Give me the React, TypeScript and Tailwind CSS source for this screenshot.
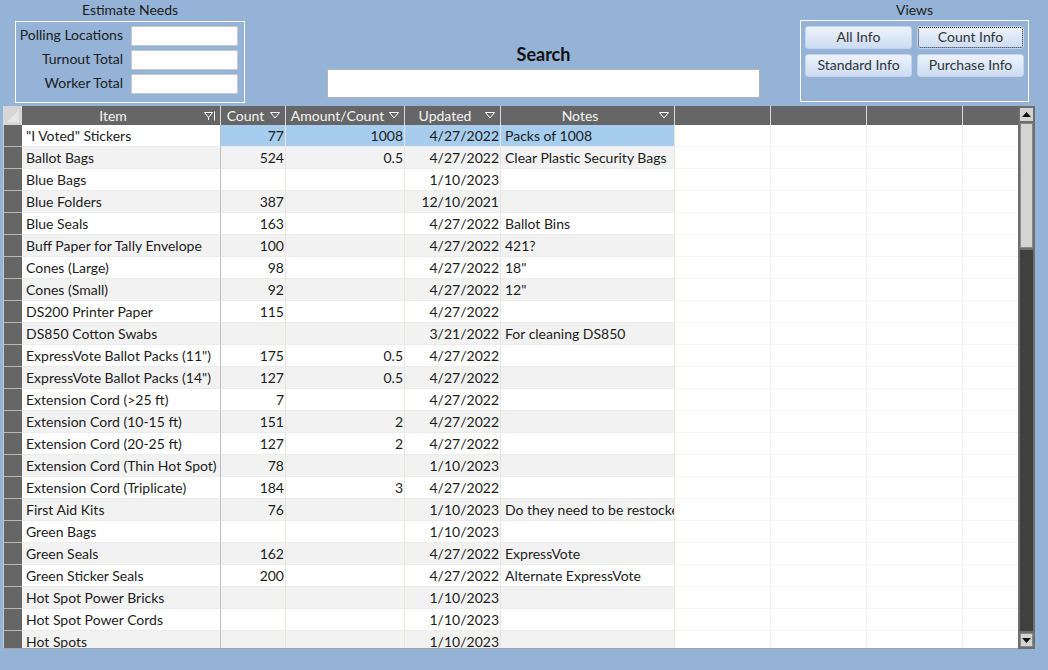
import React from "react";

type Row = [string, string, string, string, string];

const rows: Row[] = [
  ['"I Voted" Stickers', "77", "1008", "4/27/2022", "Packs of 1008"],
  ["Ballot Bags", "524", "0.5", "4/27/2022", "Clear Plastic Security Bags"],
  ["Blue Bags", "", "", "1/10/2023", ""],
  ["Blue Folders", "387", "", "12/10/2021", ""],
  ["Blue Seals", "163", "", "4/27/2022", "Ballot Bins"],
  ["Buff Paper for Tally Envelope", "100", "", "4/27/2022", "421?"],
  ["Cones (Large)", "98", "", "4/27/2022", '18"'],
  ["Cones (Small)", "92", "", "4/27/2022", '12"'],
  ["DS200 Printer Paper", "115", "", "4/27/2022", ""],
  ["DS850 Cotton Swabs", "", "", "3/21/2022", "For cleaning DS850"],
  ['ExpressVote Ballot Packs (11")', "175", "0.5", "4/27/2022", ""],
  ['ExpressVote Ballot Packs (14")', "127", "0.5", "4/27/2022", ""],
  ["Extension Cord (>25 ft)", "7", "", "4/27/2022", ""],
  ["Extension Cord (10-15 ft)", "151", "2", "4/27/2022", ""],
  ["Extension Cord (20-25 ft)", "127", "2", "4/27/2022", ""],
  ["Extension Cord (Thin Hot Spot)", "78", "", "1/10/2023", ""],
  ["Extension Cord (Triplicate)", "184", "3", "4/27/2022", ""],
  ["First Aid Kits", "76", "", "1/10/2023", "Do they need to be restocked?"],
  ["Green Bags", "", "", "1/10/2023", ""],
  ["Green Seals", "162", "", "4/27/2022", "ExpressVote"],
  ["Green Sticker Seals", "200", "", "4/27/2022", "Alternate ExpressVote"],
  ["Hot Spot Power Bricks", "", "", "1/10/2023", ""],
  ["Hot Spot Power Cords", "", "", "1/10/2023", ""],
  ["Hot Spots", "", "", "1/10/2023", ""],
];

function Arrow() {
  return (
    <svg width="10" height="7" viewBox="0 0 10 7" className="shrink-0">
      <path d="M0.5 0.5 H9.5 L5 6 Z" fill="none" stroke="#ffffff" strokeWidth="1" />
    </svg>
  );
}

function FilterArrow() {
  return (
    <svg width="12" height="10" viewBox="0 0 12 10" className="shrink-0">
      <path d="M10.5 0.5 V9.5" stroke="#ffffff" strokeWidth="1" />
      <path d="M0.5 1.5 H8.5 L4.5 6.5 Z" fill="none" stroke="#ffffff" strokeWidth="1" />
      <path d="M4.5 6.5 V9" stroke="#ffffff" strokeWidth="1" />
    </svg>
  );
}

function HeaderCell({
  w,
  label,
  icon,
}: {
  w: string;
  label?: string;
  icon?: "arrow" | "filter";
}) {
  return (
    <div className={`${w} h-full shrink-0 border-r border-[#d9d9d9] flex items-center`}>
      <div className="flex-1 text-center leading-[17px] pb-[1px] truncate">{label}</div>
      {icon === "arrow" && (
        <div className="pr-[5px] flex items-center">
          <Arrow />
        </div>
      )}
      {icon === "filter" && (
        <div className="pr-[4px] flex items-center">
          <FilterArrow />
        </div>
      )}
    </div>
  );
}

export default function App() {
  return (
    <div
      className="w-[1048px] h-[670px] bg-[#95B3D7] overflow-hidden text-[14px] text-[#1c1c1c]"
      style={{ fontFamily: "Lato, 'Noto Sans', sans-serif" }}
    >
      {/* top area */}
      <div className="flex h-[106px]">
        {/* Estimate needs */}
        <div className="ml-[15px] w-[230px] flex flex-col shrink-0">
          <div className="h-[21px] leading-[19px] text-center">Estimate Needs</div>
          <div className="h-[82px] border border-white pt-[4px] flex flex-col gap-[4px]">
            {["Polling Locations", "Turnout Total", "Worker Total"].map((l) => (
              <div key={l} className="flex items-start h-[20px]">
                <div className="w-[107px] text-right leading-[17px] whitespace-nowrap">{l}</div>
                <div className="ml-[8px] w-[107px] h-[20px] bg-white border border-[#c8c8c8]" />
              </div>
            ))}
          </div>
        </div>

        {/* Search */}
        <div className="ml-[82px] w-[433px] shrink-0 pt-[43px] flex flex-col">
          <div className="h-[22px] leading-[22px] text-center font-bold text-[18px] text-[#111]">
            Search
          </div>
          <div className="mt-[4px] h-[29px] bg-white border border-[#b4b4b4]" />
        </div>

        {/* Views */}
        <div className="ml-[40px] w-[229px] shrink-0 flex flex-col">
          <div className="h-[20px] leading-[19px] text-center">Views</div>
          <div className="h-[82px] border border-white pl-[4px] pt-[5px]">
            <div className="grid grid-cols-[107px_107px] gap-x-[5px] gap-y-[5px]">
              {["All Info", "Count Info", "Standard Info", "Purchase Info"].map((b) => (
                <div
                  key={b}
                  className="h-[23px] rounded-[3px] bg-gradient-to-b from-[#EDF3FC] to-[#CCDCF2] border border-[#C3D4EC] flex items-center justify-center text-[#333]"
                >
                  {b === "Count Info" ? (
                    <div className="w-[105px] h-[21px] border border-dotted border-[#222] rounded-[2px] flex items-center justify-center leading-[18px] pb-[2px]">
                      {b}
                    </div>
                  ) : (
                    <span className="leading-[18px] pb-[2px]">{b}</span>
                  )}
                </div>
              ))}
            </div>
          </div>
        </div>
      </div>

      {/* Datasheet */}
      <div className="ml-[3px] w-[1032px] h-[543px] flex">
        <div className="w-[1015px] flex flex-col border-b border-[#a6a6a6]">
          {/* header */}
          <div className="h-[19px] bg-[#666666] flex text-[#f4f4f4] shrink-0">
            <div className="w-[19px] h-full shrink-0 bg-[#d6d6d6] border-l border-[#c8c8c8] border-r border-[#d9d9d9] relative overflow-hidden">
              <svg width="18" height="19" viewBox="0 0 18 19" className="absolute left-0 top-0">
                <path d="M3 16 L15 4 L15 16 Z" fill="#e6e6e6" />
              </svg>
            </div>
            <HeaderCell w="w-[199px]" label="Item" icon="filter" />
            <HeaderCell w="w-[65px]" label="Count" icon="arrow" />
            <HeaderCell w="w-[119px]" label="Amount/Count" icon="arrow" />
            <HeaderCell w="w-[96px]" label="Updated" icon="arrow" />
            <HeaderCell w="w-[174px]" label="Notes" icon="arrow" />
            <HeaderCell w="w-[96px]" />
            <HeaderCell w="w-[96px]" />
            <HeaderCell w="w-[96px]" />
            <div className="flex-1 h-full" />
          </div>
          {/* body */}
          <div className="flex-1 overflow-hidden bg-white">
            {rows.map((r, i) => {
              const alt = i % 2 === 1;
              const sel = i === 0;
              const bg = sel ? "bg-[#A6CDEE]" : alt ? "bg-[#F2F2F2]" : "bg-white";
              const itemBg = alt ? "bg-[#F2F2F2]" : "bg-white";
              return (
                <div key={i} className="flex h-[22px]">
                  <div className="w-[19px] shrink-0 bg-[#666666] border-l border-[#c8c8c8] border-b border-b-[#b8b8b8]" />
                  <div
                    className={`w-[199px] shrink-0 ${itemBg} border-r border-[#bdbdbd] border-b border-b-[#ececec] pl-[4px] leading-[21px] whitespace-nowrap overflow-hidden`}
                  >
                    {r[0]}
                  </div>
                  <div
                    className={`w-[65px] shrink-0 ${bg} border-r border-[#e8e6df] border-b border-b-[#ececec] pr-[1px] text-right leading-[21px]`}
                  >
                    {r[1]}
                  </div>
                  <div
                    className={`w-[119px] shrink-0 ${bg} border-r border-[#e8e6df] border-b border-b-[#ececec] pr-[1px] text-right leading-[21px]`}
                  >
                    {r[2]}
                  </div>
                  <div
                    className={`w-[96px] shrink-0 ${bg} border-r border-[#e8e6df] border-b border-b-[#ececec] pr-[1px] text-right leading-[21px]`}
                  >
                    {r[3]}
                  </div>
                  <div
                    className={`w-[174px] shrink-0 ${bg} border-r border-[#e8e6df] border-b border-b-[#ececec] pl-[4px] leading-[21px] whitespace-nowrap overflow-hidden`}
                  >
                    {r[4]}
                  </div>
                  <div className="w-[96px] shrink-0 bg-white border-r border-[#f3f2ee] border-b border-b-[#f4f4f4]" />
                  <div className="w-[96px] shrink-0 bg-white border-r border-[#f3f2ee] border-b border-b-[#f4f4f4]" />
                  <div className="w-[96px] shrink-0 bg-white border-r border-[#f3f2ee] border-b border-b-[#f4f4f4]" />
                  <div className="flex-1 bg-white border-b border-b-[#f4f4f4]" />
                </div>
              );
            })}
          </div>
        </div>

        {/* scrollbar */}
        <div className="w-[17px] h-full bg-[#6e6e6e] p-[2px] flex flex-col gap-[2px]">
          <div className="h-[13px] bg-[#d4d4d4] flex items-center justify-center shrink-0">
            <svg width="9" height="5" viewBox="0 0 9 5">
              <path d="M0 5 L4.5 0 L9 5 Z" fill="#111" />
            </svg>
          </div>
          <div className="h-[125px] bg-[#d4d4d4] border border-[#8a8a8a] shrink-0" />
          <div className="flex-1 bg-[#404040]" />
          <div className="h-[14px] bg-[#d4d4d4] border border-[#8a8a8a] flex items-center justify-center shrink-0">
            <svg width="9" height="5" viewBox="0 0 9 5">
              <path d="M0 0 L9 0 L4.5 5 Z" fill="#111" />
            </svg>
          </div>
        </div>
      </div>
    </div>
  );
}
